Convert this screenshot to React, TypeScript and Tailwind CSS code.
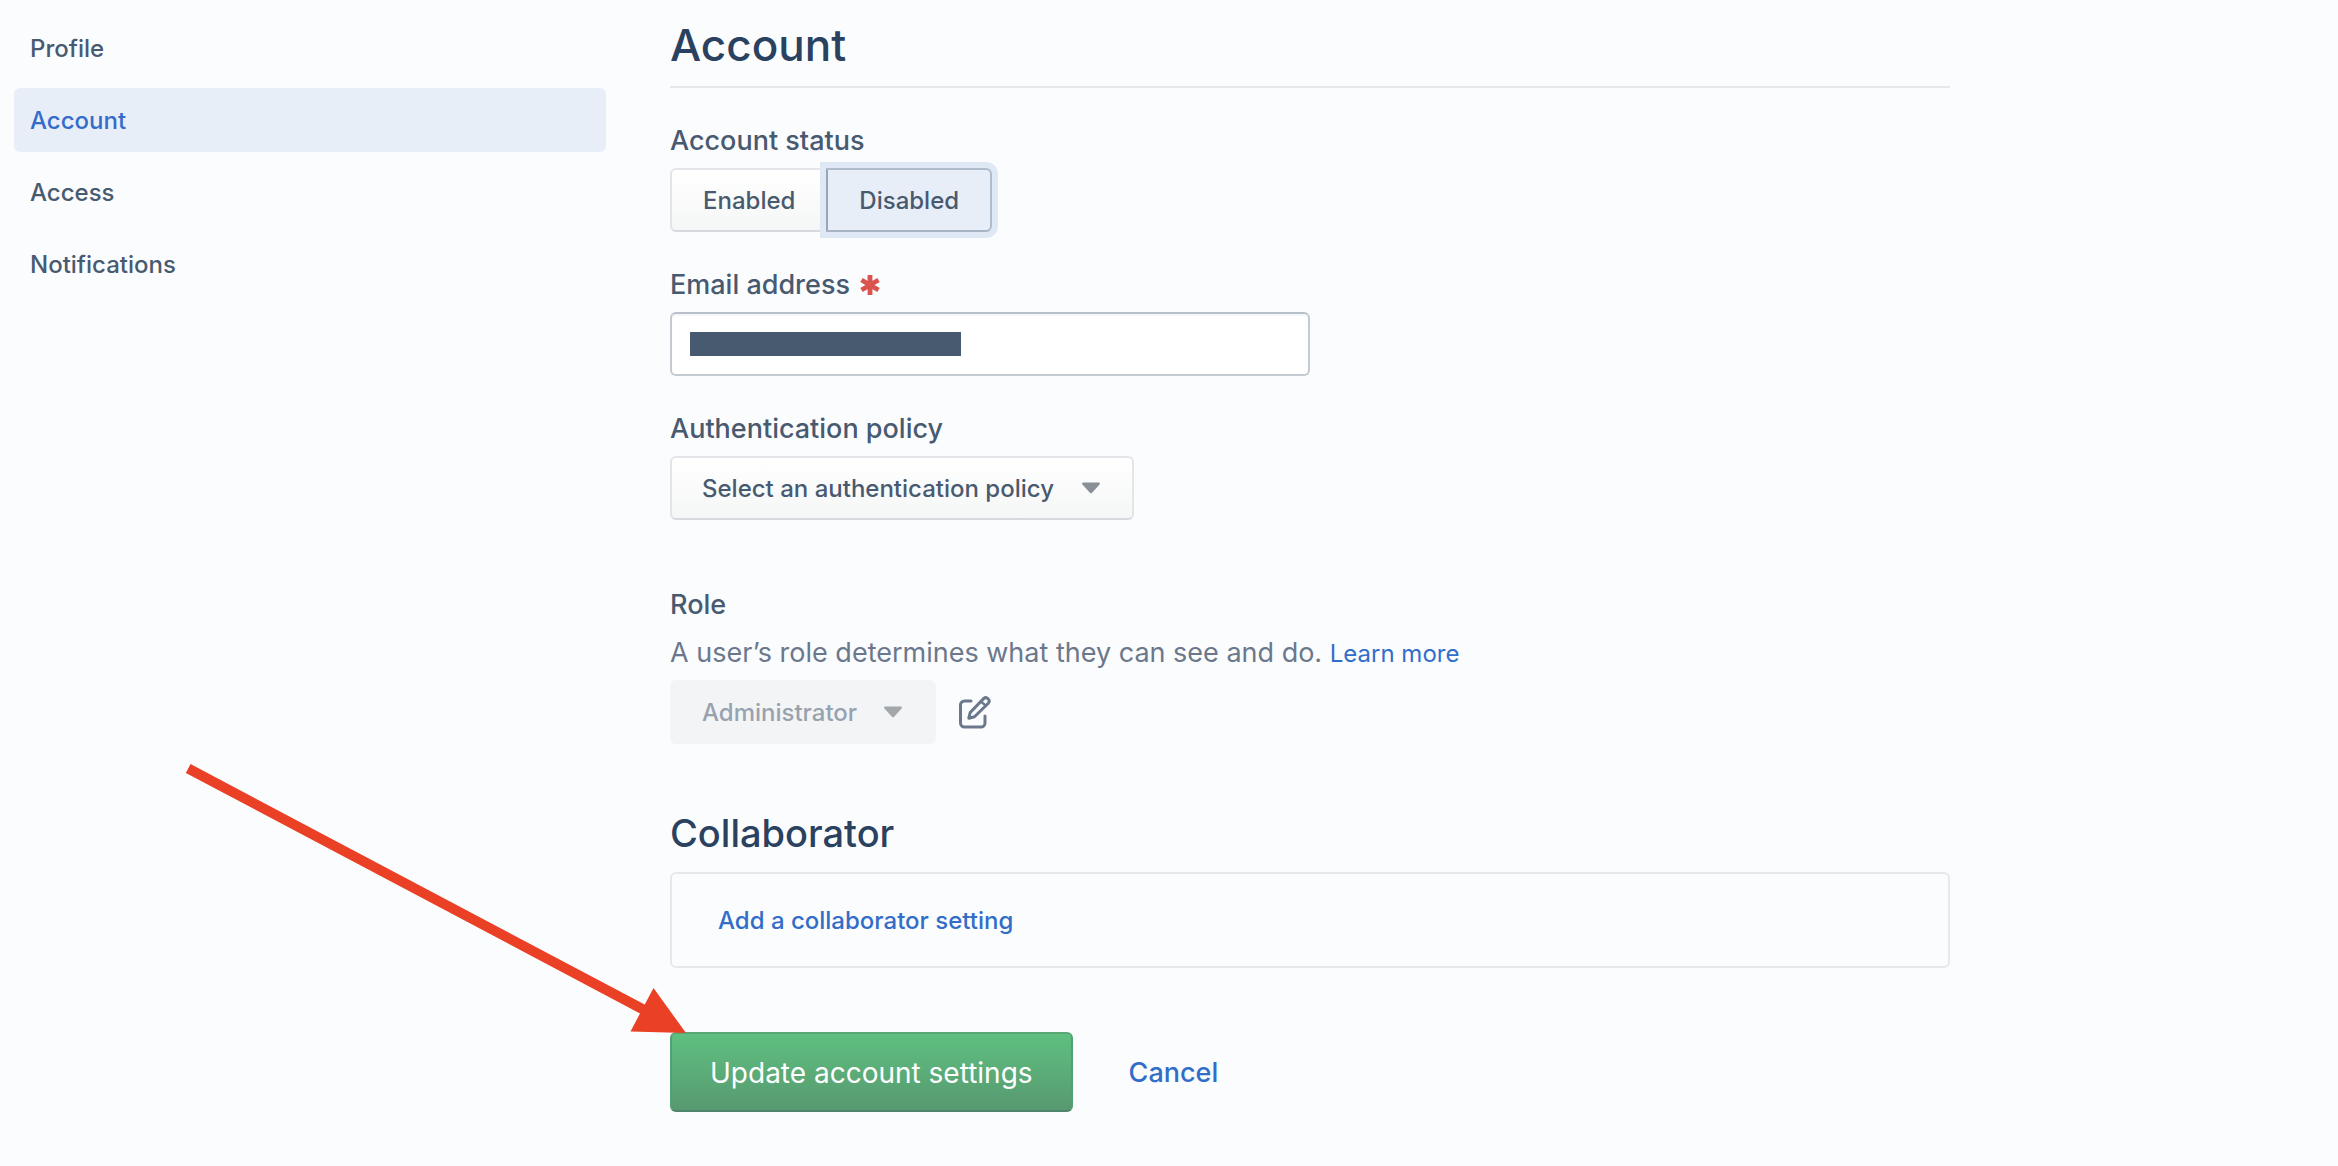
import { useState } from "react";

const navItems = ["Profile", "Account", "Access", "Notifications"];

const Caret = () => (
  <svg viewBox="0 0 20 12" className="pointer-events-none absolute top-1/2 right-[34px] h-3 w-[18px] -translate-y-1/2" aria-hidden="true">
    <path d="M1.500 0h17c1.300 0 1.800 1 1 2l-8.300 9.300c-.8.8-1.600.8-2.400 0L.5 2c-.8-1-.3-2 1-2z" fill="currentColor" />
  </svg>
);

const RequiredMark = () => (
  <svg viewBox="0 0 20 20" className="size-5 text-[#d9534f]" role="img" aria-label="required">
    <path d="M10 0v20M1.500 5l17 10M18.500 5l-17 10" stroke="currentColor" strokeWidth="4.800" />
  </svg>
);

const EditIcon = () => (
  <svg viewBox="0 0 34 34" className="size-[34px]" fill="none" stroke="currentColor" strokeWidth="3" strokeLinejoin="round" strokeLinecap="round" aria-hidden="true">
    <path d="M13 6H6.500a4 4 0 0 0-4 4v18a4 4 0 0 0 4 4h16.500a4 4 0 0 0 4-4v-7" />
    <path d="M10.800 23.200l1.400-5.700L25.600 3.600a3.300 3.300 0 0 1 4.700 4.600L16.500 21.700z" />
    <path d="M23 6.500l4.700 4.200" strokeWidth="2.400" />
  </svg>
);

const Arrow = () => (
  <svg className="pointer-events-none absolute left-[180px] top-[760px] h-[280px] w-[510px]" viewBox="180 760 510 280" aria-hidden="true">
    <path d="M188.200 768.500L648 1012" stroke="#ea4025" strokeWidth="10" />
    <path d="M686 1033L653.500 988L630.500 1031.500z" fill="#ea4025" />
  </svg>
);

const App = () => {
  const [activeTab, setActiveTab] = useState("Account");
  const [status, setStatus] = useState("Disabled");

  return (
    <div className="relative min-h-screen bg-[#fbfcfe] font-[Inter,sans-serif] text-[#485a70]">
      <div className="flex gap-16 px-[14px] pt-4 pb-[54px]">
        {/* Sidebar */}
        <nav className="flex w-[592px] shrink-0 flex-col gap-2">
          {navItems.map((item) => (
            <a
              key={item}
              href="#"
              onClick={() => setActiveTab(item)}
              className={`flex h-16 items-center rounded-md px-4 pt-0.5 text-2xl font-medium ${
                activeTab === item ? "bg-[#e8eef8] text-[#326dc9]" : ""
              }`}
            >
              {item}
            </a>
          ))}
        </nav>

        {/* Main Content */}
        <main className="min-w-0 max-w-[1280px] flex-1">
          <h1 className="border-b-2 border-[#e6e8ea] pb-3 text-[44px] leading-[58px] font-medium text-[#2a415f]">Account</h1>

          <form onSubmit={(e) => e.preventDefault()}>
            <div className="mt-8">
              <div id="status-label" className="text-[27px] leading-[42px] font-medium">Account status</div>
              <div role="group" aria-labelledby="status-label" className="mt-1.5 flex">
                {["Enabled", "Disabled"].map((option) => (
                  <button
                    key={option}
                    type="button"
                    aria-pressed={status === option}
                    onClick={() => setStatus(option)}
                    className={`h-16 border-2 px-[31px] pt-0.5 text-2xl font-medium first:rounded-l-md first:border-r-0 last:rounded-r-md ${
                      status === option
                        ? "relative border-[#afbccb] border-l-[#97a5b7] border-b-[#a6b4c4] bg-[#e8eef8] shadow-[0_0_0_6px_#dfe9f5]"
                        : "border-[#e3e5e8] border-b-[#d6d9dd] bg-linear-to-b from-white to-[#f5f6f6]"
                    }`}
                  >
                    {option}
                  </button>
                ))}
              </div>
            </div>

            <div className="mt-8">
              <label htmlFor="email" className="flex items-center gap-2.5 text-[27px] leading-[42px] font-medium">
                Email address
                <RequiredMark />
              </label>
              <div className="relative mt-1.5 w-1/2">
                <input
                  id="email"
                  type="email"
                  className="block h-16 w-full rounded-md border-2 border-[#c3cad1] border-t-[#b7c0c9] bg-white px-[18px] text-2xl shadow-[inset_0_2px_2px_#f3f5f6]"
                />
                <div className="pointer-events-none absolute top-5 left-5 h-6 w-[271px] bg-[#485a70]" />
              </div>
            </div>

            <div className="mt-8">
              <label htmlFor="policy" className="block text-[27px] leading-[42px] font-medium">Authentication policy</label>
              <div className="relative mt-1.5 w-fit text-[#8a9095]">
                <select
                  id="policy"
                  className="block h-16 appearance-none rounded-md border-2 border-[#e3e5e8] border-b-[#d6d9dd] bg-linear-to-b from-white to-[#f5f6f6] pt-0.5 pr-[78px] pl-[30px] text-2xl font-medium text-[#485a70]"
                >
                  <option>Select an authentication policy</option>
                </select>
                <Caret />
              </div>
            </div>

            <div className="mt-16">
              <label htmlFor="role" className="block text-[27px] leading-[42px] font-medium">Role</label>
              <p className="mt-1.5 text-[27px] leading-[42px] text-[#6b788b]">
                A user’s role determines what they can see and do.{" "}
                <a href="#" className="text-2xl text-[#326dc9]">Learn more</a>
              </p>
              <div className="mt-1.5 flex items-center gap-[22px]">
                <div className="relative text-[#a2a7ab]">
                  <select
                    id="role"
                    disabled
                    className="block h-16 appearance-none rounded-md bg-[#f3f4f6] pt-0.5 pr-[78px] pl-8 text-2xl font-medium text-[#97a2af] opacity-100"
                  >
                    <option>Administrator</option>
                  </select>
                  <Caret />
                </div>
                <button type="button" aria-label="Edit role" className="text-[#6b788b]">
                  <EditIcon />
                </button>
              </div>
            </div>

            <section className="mt-16">
              <h2 className="text-[38px] leading-[50px] font-medium text-[#2a415f]">Collaborator</h2>
              <div className="mt-3.5 flex h-24 items-center rounded-md border-2 border-[#e6e8ea] px-[46px] pt-0.5">
                <a href="#" className="text-2xl font-medium text-[#326dc9]">Add a collaborator setting</a>
              </div>
            </section>

            <div className="mt-16 flex items-center gap-14">
              <button
                type="submit"
                className="h-20 rounded-md border-2 border-[#559f75] border-t-[#58a774] border-b-[#4f8669] bg-linear-to-b from-[#5ec080] to-[#579970] px-[38px] pt-0.5 text-[28px] text-white"
              >
                Update account settings
              </button>
              <a href="#" className="pt-0.5 text-[27px] font-medium text-[#326dc9]">Cancel</a>
            </div>
          </form>
        </main>
      </div>

      <Arrow />
    </div>
  );
};

export default App;
